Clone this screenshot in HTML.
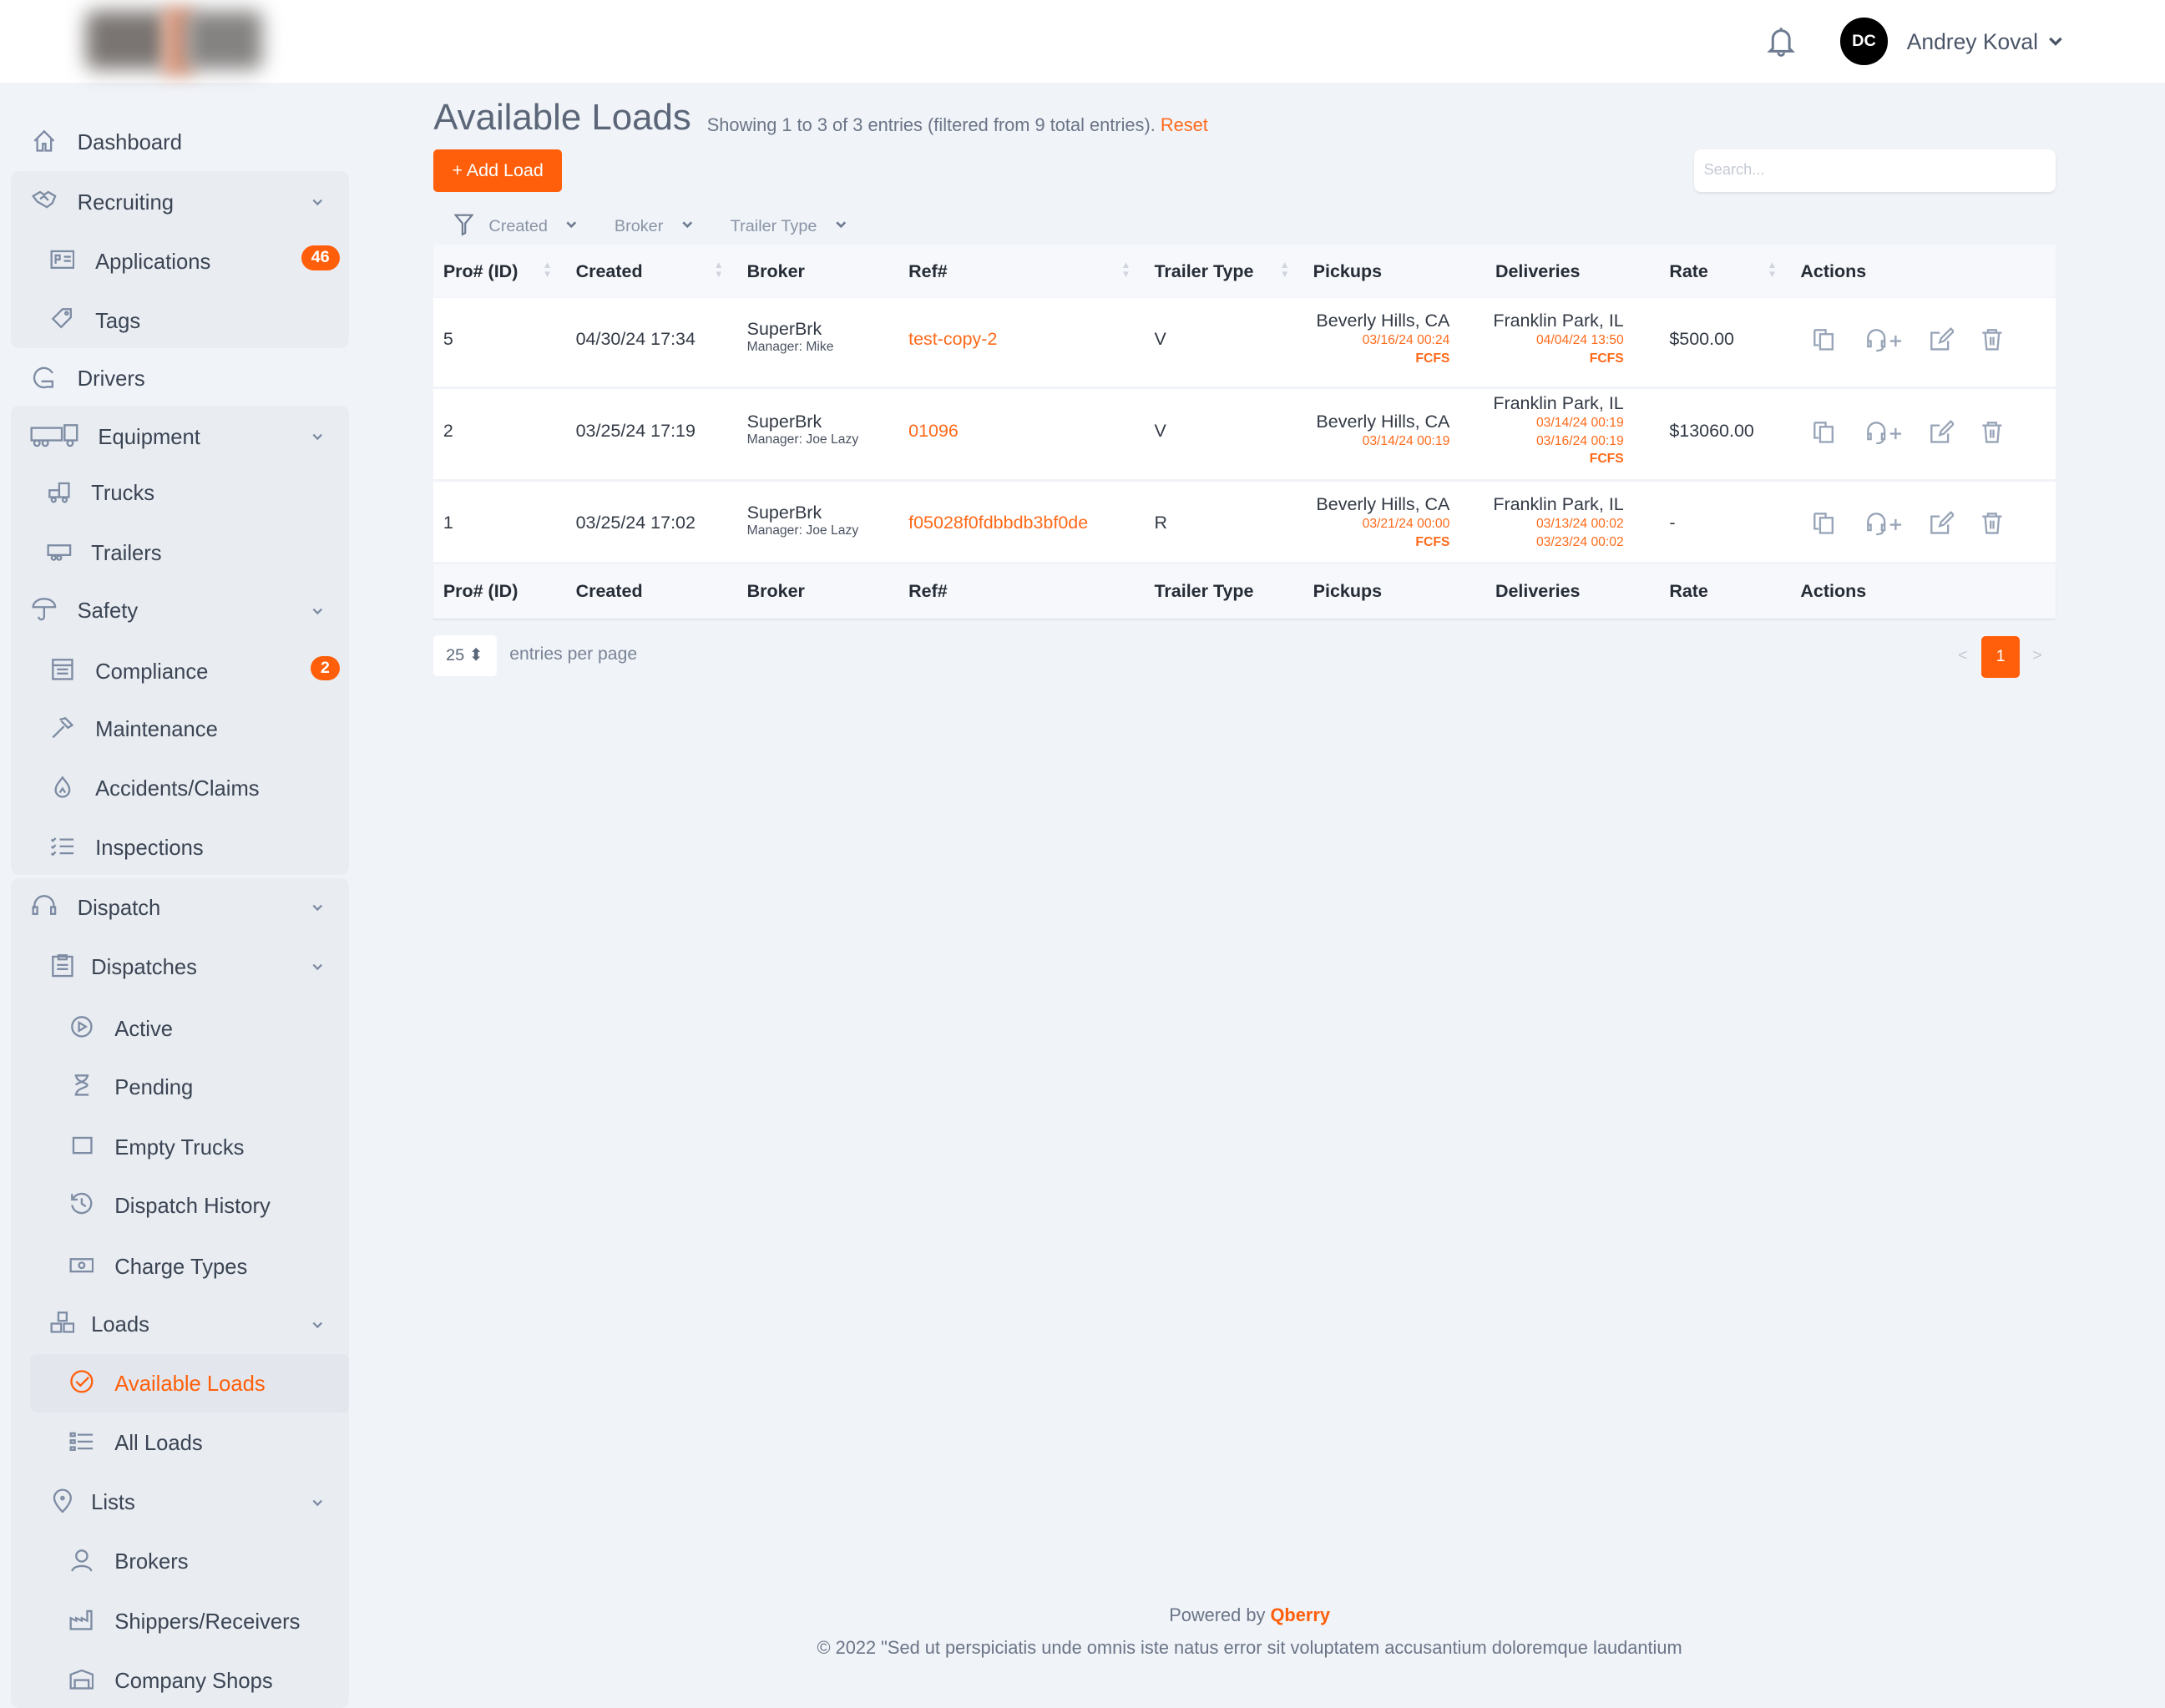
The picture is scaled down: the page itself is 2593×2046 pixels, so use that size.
<!DOCTYPE html>
<html><head><meta charset="utf-8">
<style>
html,body{margin:0;padding:0;background:#f0f3f8;overflow:hidden}
#w{zoom:1.65370;width:1568px;height:1237px;position:relative;font-family:"Liberation Sans",sans-serif;color:#3b4453;background:#f0f3f8}
.a{position:absolute}
.hdr{left:0;top:0;width:1568px;height:60px;background:#fff}
.grp{background:#e9edf2;border-radius:6px;left:8px;width:245px}
.it{position:absolute;font-size:15.5px;line-height:20px;white-space:nowrap;color:#3b4453;margin-top:1px}
.ic{position:absolute;width:18px;height:18px}
.ic svg{width:18px;height:18px;fill:none;stroke:#7d8ba3;stroke-width:1.4}
.chev{position:absolute;left:225px;width:10px;height:10px}
.badge{position:absolute;background:#ff5f0a;color:#fff;font-weight:bold;font-size:12px;border-radius:10px;height:18px;line-height:18px;text-align:center}
.th{position:absolute;font-size:13px;font-weight:bold;color:#262c36}
.td{position:absolute;font-size:13px;color:#333a45;white-space:nowrap}
.or{color:#ff6a1a}
.sm{font-size:9.5px;line-height:13px}
.rt{text-align:right}
.act svg{position:absolute;width:18px;height:18px;fill:none;stroke:#97a3b6;stroke-width:1.4}
</style></head><body><div id="w">
<div class="a hdr"></div>
<div class="a" style="left:62px;top:8px;width:60px;height:42px;background:#7a7572;filter:blur(7px);border-radius:6px"></div>
<div class="a" style="left:118px;top:5px;width:22px;height:50px;background:#d99a80;filter:blur(6px)"></div>
<div class="a" style="left:135px;top:8px;width:55px;height:42px;background:#858382;filter:blur(7px);border-radius:6px"></div>
<svg class="a" style="left:1279px;top:18px" width="22" height="24" viewBox="0 0 22 24" fill="none" stroke="#6d7a90" stroke-width="1.8"><path d="M5 17V10a6 6 0 0 1 12 0v7l2 2H3z"/><path d="M9 20a2 2 0 0 0 4 0"/><path d="M11 2v2"/></svg>
<div class="a" style="left:1333px;top:13px;width:34px;height:34px;border-radius:50%;background:#000;color:#fff;font-weight:bold;font-size:12px;line-height:34px;text-align:center">DC</div>
<div class="a" style="left:1381px;top:21px;font-size:16px;color:#4a5568">Andrey Koval</div>
<svg class="a" style="left:1483px;top:25px" width="12" height="10" viewBox="0 0 12 10" fill="none" stroke="#4a5568" stroke-width="2"><path d="M2 3l4 4 4-4"/></svg>

<div class="a grp" style="top:124px;height:128px"></div>
<div class="a grp" style="top:294px;height:340px"></div>
<div class="a grp" style="top:636px;height:601px"></div>
<div class="a" style="left:22px;top:981px;width:231px;height:42px;background:#e3e7ed;border-radius:5px"></div>

<div class="ic" style="left:23px;top:93px"><svg viewBox="0 0 18 18"><path d="M2 9L9 2l7 7M4 7v9h4v-5h2v5h4V7"/></svg></div><div class="it" style="left:56px;top:93px">Dashboard</div>
<div class="ic" style="left:23px;top:136px"><svg viewBox="0 0 18 18"><path d="M1 6l5-3 3 2 3-2 5 3-2 5-4 3-7-4z M6 8l3-2 3 3"/></svg></div><div class="it" style="left:56px;top:136px">Recruiting</div>
<div class="ic" style="left:36px;top:179px"><svg viewBox="0 0 18 18"><rect x="1" y="3" width="16" height="12"/><path d="M4 12V6h3v3H4 M10 7h5M10 10h5"/></svg></div><div class="it" style="left:69px;top:179px">Applications</div>
<div class="badge" style="left:218px;top:178px;width:28px">46</div>
<div class="ic" style="left:36px;top:222px"><svg viewBox="0 0 18 18"><path d="M2 9l7-7h6v6l-7 7z"/><circle cx="12" cy="5" r="1"/></svg></div><div class="it" style="left:69px;top:222px">Tags</div>
<div class="ic" style="left:23px;top:264px"><svg viewBox="0 0 18 18"><path d="M15 6a7 7 0 1 0-4 10h4v-4H7"/></svg></div><div class="it" style="left:56px;top:264px">Drivers</div>
<div class="ic" style="left:22px;top:306px;width:36px"><svg viewBox="0 0 36 18" style="width:36px"><rect x="1" y="4" width="22" height="9"/><rect x="25" y="2" width="9" height="11"/><circle cx="5" cy="15" r="2"/><circle cx="11" cy="15" r="2"/><circle cx="29" cy="15" r="2"/></svg></div><div class="it" style="left:71px;top:306px">Equipment</div>
<div class="ic" style="left:34px;top:347px"><svg viewBox="0 0 18 18"><rect x="9" y="3" width="7" height="10"/><rect x="2" y="8" width="7" height="5"/><circle cx="5" cy="15" r="1.5"/><circle cx="13" cy="15" r="1.5"/></svg></div><div class="it" style="left:66px;top:347px">Trucks</div>
<div class="ic" style="left:34px;top:390px"><svg viewBox="0 0 18 18"><rect x="1" y="5" width="16" height="7"/><circle cx="5" cy="14" r="1.5"/><circle cx="9" cy="14" r="1.5"/></svg></div><div class="it" style="left:66px;top:390px">Trailers</div>
<div class="ic" style="left:23px;top:432px"><svg viewBox="0 0 18 18"><path d="M1 8a8 6 0 0 1 16 0z M9 8v7a2 2 0 0 1-4 0"/></svg></div><div class="it" style="left:56px;top:432px">Safety</div>
<div class="ic" style="left:36px;top:476px"><svg viewBox="0 0 18 18"><rect x="2" y="2" width="14" height="14"/><path d="M2 6h14M5 9h8M5 12h8"/></svg></div><div class="it" style="left:69px;top:476px">Compliance</div>
<div class="badge" style="left:225px;top:475px;width:21px">2</div>
<div class="ic" style="left:36px;top:518px"><svg viewBox="0 0 18 18"><path d="M2 16l8-8M7 3l4-1 5 5-3 2-5-5"/></svg></div><div class="it" style="left:69px;top:518px">Maintenance</div>
<div class="ic" style="left:36px;top:561px"><svg viewBox="0 0 18 18"><path d="M9 2c3 4 5 6 5 9a5 5 0 0 1-10 0c0-3 2-5 5-9z M7 13l2-3 2 3"/></svg></div><div class="it" style="left:69px;top:561px">Accidents/Claims</div>
<div class="ic" style="left:36px;top:604px"><svg viewBox="0 0 18 18"><path d="M7 4h10M7 9h10M7 14h10M1 4l1 1 2-2M1 9l1 1 2-2M1 14l1 1 2-2"/></svg></div><div class="it" style="left:69px;top:604px">Inspections</div>
<div class="ic" style="left:23px;top:647px"><svg viewBox="0 0 18 18"><path d="M2 11V9a7 7 0 0 1 14 0v2"/><rect x="1" y="10" width="3" height="5"/><rect x="14" y="10" width="3" height="5"/></svg></div><div class="it" style="left:56px;top:647px">Dispatch</div>
<div class="ic" style="left:36px;top:690px"><svg viewBox="0 0 18 18"><rect x="2" y="3" width="14" height="14"/><path d="M6 2h6v3H6z M5 9h8M5 12h8"/></svg></div><div class="it" style="left:66px;top:690px">Dispatches</div>
<div class="ic" style="left:50px;top:735px"><svg viewBox="0 0 18 18"><circle cx="9" cy="9" r="7"/><path d="M7 6l5 3-5 3z"/></svg></div><div class="it" style="left:83px;top:735px">Active</div>
<div class="ic" style="left:50px;top:777px"><svg viewBox="0 0 18 18"><path d="M4 2h10M4 16h10M5 2c0 5 8 5 8 7s-8 2-8 7M13 2c0 5-8 5-8 7"/></svg></div><div class="it" style="left:83px;top:777px">Pending</div>
<div class="ic" style="left:50px;top:821px"><svg viewBox="0 0 18 18"><rect x="3" y="3" width="13" height="11"/></svg></div><div class="it" style="left:83px;top:821px">Empty Trucks</div>
<div class="ic" style="left:50px;top:863px"><svg viewBox="0 0 18 18"><path d="M3 5a7 7 0 1 1-1 5M2 2v4h4M9 5v4l3 2"/></svg></div><div class="it" style="left:83px;top:863px">Dispatch History</div>
<div class="ic" style="left:50px;top:907px"><svg viewBox="0 0 18 18"><rect x="1" y="5" width="16" height="9"/><circle cx="9" cy="9.5" r="2"/></svg></div><div class="it" style="left:83px;top:907px">Charge Types</div>
<div class="ic" style="left:36px;top:949px"><svg viewBox="0 0 18 18"><rect x="6" y="2" width="6" height="6"/><rect x="1" y="10" width="7" height="6"/><rect x="10" y="10" width="7" height="6"/></svg></div><div class="it" style="left:66px;top:949px">Loads</div>
<div class="ic" style="left:50px;top:992px"><svg viewBox="0 0 18 18" style="stroke:#ff5f0a"><circle cx="9" cy="9" r="7.5"/><path d="M5 9l3 3 6-6"/></svg></div><div class="it" style="left:83px;top:992px;color:#ff5f0a">Available Loads</div>
<div class="ic" style="left:50px;top:1035px"><svg viewBox="0 0 18 18"><path d="M6 4h11M6 9h11M6 14h11M1 3h3v2H1zM1 8h3v2H1zM1 13h3v2H1z"/></svg></div><div class="it" style="left:83px;top:1035px">All Loads</div>
<div class="ic" style="left:36px;top:1078px"><svg viewBox="0 0 18 18"><path d="M9 17s6-6 6-10A6 6 0 0 0 3 7c0 4 6 10 6 10z"/><circle cx="9" cy="7" r="1"/></svg></div><div class="it" style="left:66px;top:1078px">Lists</div>
<div class="ic" style="left:50px;top:1121px"><svg viewBox="0 0 18 18"><circle cx="9" cy="6" r="4"/><path d="M2 17c1-5 13-5 14 0"/></svg></div><div class="it" style="left:83px;top:1121px">Brokers</div>
<div class="ic" style="left:50px;top:1164px"><svg viewBox="0 0 18 18"><path d="M1 16V8l4 2V8l4 2V8l4 2V3h3v13z"/></svg></div><div class="it" style="left:83px;top:1164px">Shippers/Receivers</div>
<div class="ic" style="left:50px;top:1207px"><svg viewBox="0 0 18 18"><path d="M1 16V6l8-3 8 3v10zM4 10h10v6H4z"/></svg></div><div class="it" style="left:83px;top:1207px">Company Shops</div>

<svg class="chev" style="top:141px" viewBox="0 0 10 10" fill="none" stroke="#7d8ba3" stroke-width="1.4"><path d="M2 4l3 3 3-3"/></svg>
<svg class="chev" style="top:311px" viewBox="0 0 10 10" fill="none" stroke="#7d8ba3" stroke-width="1.4"><path d="M2 4l3 3 3-3"/></svg>
<svg class="chev" style="top:437px" viewBox="0 0 10 10" fill="none" stroke="#7d8ba3" stroke-width="1.4"><path d="M2 4l3 3 3-3"/></svg>
<svg class="chev" style="top:652px" viewBox="0 0 10 10" fill="none" stroke="#7d8ba3" stroke-width="1.4"><path d="M2 4l3 3 3-3"/></svg>
<svg class="chev" style="top:695px" viewBox="0 0 10 10" fill="none" stroke="#7d8ba3" stroke-width="1.4"><path d="M2 4l3 3 3-3"/></svg>
<svg class="chev" style="top:954px" viewBox="0 0 10 10" fill="none" stroke="#7d8ba3" stroke-width="1.4"><path d="M2 4l3 3 3-3"/></svg>
<svg class="chev" style="top:1083px" viewBox="0 0 10 10" fill="none" stroke="#7d8ba3" stroke-width="1.4"><path d="M2 4l3 3 3-3"/></svg>

<div class="a" style="left:314px;top:70px;font-size:26.5px;color:#5b6678">Available Loads</div>
<div class="a" style="left:512px;top:83px;font-size:13.2px;color:#6b7587">Showing 1 to 3 of 3 entries (filtered from 9 total entries). <span class="or">Reset</span></div>
<div class="a" style="left:314px;top:108px;width:93px;height:31px;background:#ff5f0a;border-radius:3px;color:#fff;font-size:13px;line-height:31px;text-align:center">+ Add Load</div>
<div class="a" style="left:1227px;top:108px;width:262px;height:31px;background:#fff;border-radius:5px;box-shadow:0 1px 2px rgba(0,0,0,.08)"><span style="position:absolute;left:7px;top:9px;font-size:11px;color:#c4cad4">Search...</span></div>

<svg class="a" style="left:329px;top:155px" width="14" height="16" viewBox="0 0 14 16" fill="none" stroke="#6d7a90" stroke-width="1.3"><path d="M1 1h12L8 7v7l-2 1V7z"/></svg>
<div class="a" style="left:354px;top:157px;font-size:12px;color:#8a94a5">Created</div>
<svg class="a" style="left:409px;top:159px" width="10" height="8" viewBox="0 0 10 8" fill="none" stroke="#6d7a90" stroke-width="1.6"><path d="M2 2l3 3 3-3"/></svg>
<div class="a" style="left:445px;top:157px;font-size:12px;color:#8a94a5">Broker</div>
<svg class="a" style="left:493px;top:159px" width="10" height="8" viewBox="0 0 10 8" fill="none" stroke="#6d7a90" stroke-width="1.6"><path d="M2 2l3 3 3-3"/></svg>
<div class="a" style="left:529px;top:157px;font-size:12px;color:#8a94a5">Trailer Type</div>
<svg class="a" style="left:604px;top:159px" width="10" height="8" viewBox="0 0 10 8" fill="none" stroke="#6d7a90" stroke-width="1.6"><path d="M2 2l3 3 3-3"/></svg>

<div class="a" style="left:314px;top:177px;width:1175px;height:38px;background:#f6f8fb"></div>
<div class="a" style="left:314px;top:216px;width:1175px;height:64px;background:#fff"></div>
<div class="a" style="left:314px;top:282px;width:1175px;height:65px;background:#fff"></div>
<div class="a" style="left:314px;top:349px;width:1175px;height:58px;background:#fff"></div>
<div class="a" style="left:314px;top:409px;width:1175px;height:39px;background:#f6f8fb;box-shadow:0 1px 1px rgba(0,0,0,.08)"></div>

<div class="th" style="left:321px;top:189px">Pro# (ID)</div><div class="th" style="left:417px;top:189px">Created</div><div class="th" style="left:541px;top:189px">Broker</div><div class="th" style="left:658px;top:189px">Ref#</div><div class="th" style="left:836px;top:189px">Trailer Type</div><div class="th" style="left:951px;top:189px">Pickups</div><div class="th" style="left:1083px;top:189px">Deliveries</div><div class="th" style="left:1209px;top:189px">Rate</div><div class="th" style="left:1304px;top:189px">Actions</div>
<div class="a" style="left:393px;top:189px;font-size:7px;color:#d0d5dd;line-height:7px">▲<br>▼</div>
<div class="a" style="left:517px;top:189px;font-size:7px;color:#d0d5dd;line-height:7px">▲<br>▼</div>
<div class="a" style="left:812px;top:189px;font-size:7px;color:#d0d5dd;line-height:7px">▲<br>▼</div>
<div class="a" style="left:927px;top:189px;font-size:7px;color:#d0d5dd;line-height:7px">▲<br>▼</div>
<div class="a" style="left:1280px;top:189px;font-size:7px;color:#d0d5dd;line-height:7px">▲<br>▼</div>

<div class="th" style="left:321px;top:421px">Pro# (ID)</div><div class="th" style="left:417px;top:421px">Created</div><div class="th" style="left:541px;top:421px">Broker</div><div class="th" style="left:658px;top:421px">Ref#</div><div class="th" style="left:836px;top:421px">Trailer Type</div><div class="th" style="left:951px;top:421px">Pickups</div><div class="th" style="left:1083px;top:421px">Deliveries</div><div class="th" style="left:1209px;top:421px">Rate</div><div class="th" style="left:1304px;top:421px">Actions</div>

<div class="td" style="left:321px;top:238px">5</div><div class="td" style="left:417px;top:238px">04/30/24 17:34</div>
<div class="td" style="left:541px;top:231px">SuperBrk<div style="font-size:9.5px;color:#4a5260">Manager: Mike</div></div>
<div class="td or" style="left:658px;top:238px">test-copy-2</div><div class="td" style="left:836px;top:238px">V</div>
<div class="td rt" style="right:518px;top:225px">Beverly Hills, CA<div class="sm or">03/16/24 00:24</div><div class="sm or" style="font-weight:bold">FCFS</div></div>
<div class="td rt" style="right:392px;top:225px">Franklin Park, IL<div class="sm or">04/04/24 13:50</div><div class="sm or" style="font-weight:bold">FCFS</div></div>
<div class="td" style="left:1209px;top:238px">$500.00</div>
<div class="td" style="left:321px;top:305px">2</div><div class="td" style="left:417px;top:305px">03/25/24 17:19</div>
<div class="td" style="left:541px;top:298px">SuperBrk<div style="font-size:9.5px;color:#4a5260">Manager: Joe Lazy</div></div>
<div class="td or" style="left:658px;top:305px">01096</div><div class="td" style="left:836px;top:305px">V</div>
<div class="td rt" style="right:518px;top:298px">Beverly Hills, CA<div class="sm or">03/14/24 00:19</div></div>
<div class="td rt" style="right:392px;top:285px">Franklin Park, IL<div class="sm or">03/14/24 00:19</div><div class="sm or">03/16/24 00:19</div><div class="sm or" style="font-weight:bold">FCFS</div></div>
<div class="td" style="left:1209px;top:305px">$13060.00</div>
<div class="td" style="left:321px;top:371px">1</div><div class="td" style="left:417px;top:371px">03/25/24 17:02</div>
<div class="td" style="left:541px;top:364px">SuperBrk<div style="font-size:9.5px;color:#4a5260">Manager: Joe Lazy</div></div>
<div class="td or" style="left:658px;top:371px">f05028f0fdbbdb3bf0de</div><div class="td" style="left:836px;top:371px">R</div>
<div class="td rt" style="right:518px;top:358px">Beverly Hills, CA<div class="sm or">03/21/24 00:00</div><div class="sm or" style="font-weight:bold">FCFS</div></div>
<div class="td rt" style="right:392px;top:358px">Franklin Park, IL<div class="sm or">03/13/24 00:02</div><div class="sm or">03/23/24 00:02</div></div>
<div class="td" style="left:1209px;top:371px">-</div>

<div class="a act" style="left:0;top:237px">
<svg style="left:1312px" viewBox="0 0 18 18"><path d="M2 2h8v3M2 2v11h3"/><rect x="6" y="5" width="9" height="11"/></svg>
<svg style="left:1351px;width:28px" viewBox="0 0 28 18"><path d="M2 11V8a6 6 0 0 1 12 0v3M2 10v4h2v-4zM12 10v4h2v-4zM13 14c0 2-2 3-5 3M18 10h8M22 6v8"/></svg>
<svg style="left:1397px" viewBox="0 0 18 18"><path d="M14 10v6H2V4h6M8 11l1-3 7-7 2 2-7 7z"/></svg>
<svg style="left:1434px" viewBox="0 0 18 18"><path d="M2 4h14M6 4V2h6v2M4 4l1 12h8l1-12M8 7v6M10 7v6"/></svg>
</div>
<div class="a act" style="left:0;top:304px">
<svg style="left:1312px" viewBox="0 0 18 18"><path d="M2 2h8v3M2 2v11h3"/><rect x="6" y="5" width="9" height="11"/></svg>
<svg style="left:1351px;width:28px" viewBox="0 0 28 18"><path d="M2 11V8a6 6 0 0 1 12 0v3M2 10v4h2v-4zM12 10v4h2v-4zM13 14c0 2-2 3-5 3M18 10h8M22 6v8"/></svg>
<svg style="left:1397px" viewBox="0 0 18 18"><path d="M14 10v6H2V4h6M8 11l1-3 7-7 2 2-7 7z"/></svg>
<svg style="left:1434px" viewBox="0 0 18 18"><path d="M2 4h14M6 4V2h6v2M4 4l1 12h8l1-12M8 7v6M10 7v6"/></svg>
</div>
<div class="a act" style="left:0;top:370px">
<svg style="left:1312px" viewBox="0 0 18 18"><path d="M2 2h8v3M2 2v11h3"/><rect x="6" y="5" width="9" height="11"/></svg>
<svg style="left:1351px;width:28px" viewBox="0 0 28 18"><path d="M2 11V8a6 6 0 0 1 12 0v3M2 10v4h2v-4zM12 10v4h2v-4zM13 14c0 2-2 3-5 3M18 10h8M22 6v8"/></svg>
<svg style="left:1397px" viewBox="0 0 18 18"><path d="M14 10v6H2V4h6M8 11l1-3 7-7 2 2-7 7z"/></svg>
<svg style="left:1434px" viewBox="0 0 18 18"><path d="M2 4h14M6 4V2h6v2M4 4l1 12h8l1-12M8 7v6M10 7v6"/></svg>
</div>

<div class="a" style="left:314px;top:460px;width:46px;height:30px;background:#fff;border-radius:3px;font-size:12px;color:#5b6678;line-height:30px;text-indent:9px">25 ⬍</div>
<div class="a" style="left:369px;top:467px;font-size:12.8px;color:#7a8496">entries per page</div>
<div class="a" style="left:1418px;top:468px;font-size:12px;color:#c4cad4">&lt;</div>
<div class="a" style="left:1435px;top:461px;width:28px;height:30px;background:#ff5f0a;border-radius:3px;color:#fff;font-size:12px;line-height:30px;text-align:center">1</div>
<div class="a" style="left:1472px;top:468px;font-size:12px;color:#c4cad4">&gt;</div>

<div class="a" style="left:314px;width:1182px;top:1162px;text-align:center;font-size:13.2px;color:#6b7587">Powered by <b style="color:#ff5f0a">Qberry</b></div>
<div class="a" style="left:314px;width:1182px;top:1186px;text-align:center;font-size:13.2px;color:#6b7587">© 2022 "Sed ut perspiciatis unde omnis iste natus error sit voluptatem accusantium doloremque laudantium</div>
</div></body></html>
